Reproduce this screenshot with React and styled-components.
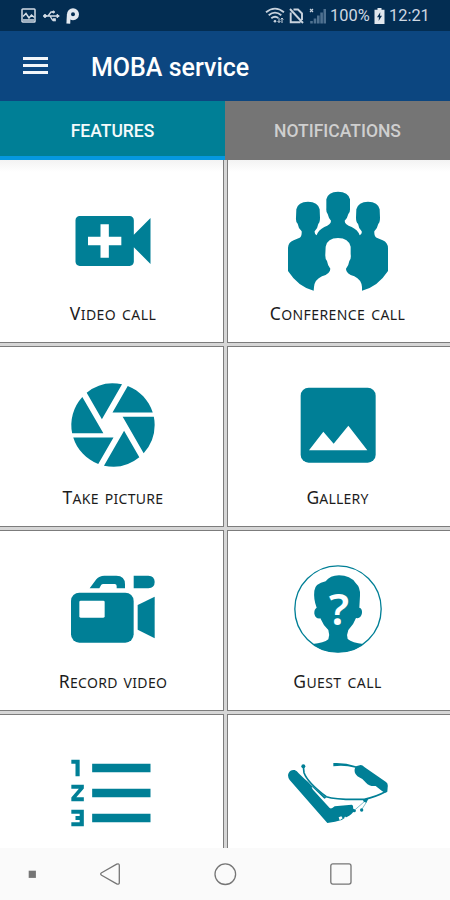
import styled, { createGlobalStyle } from "styled-components";
import { MdVideoCall, MdCamera, MdFormatListNumbered } from "react-icons/md";

const TEAL = "#007f96";

export default function App() {
    return (
        <Screen>
            <GlobalStyle/>
            <StatusBar>
                <StatusGroup>
                    <PictureIcon/>
                    <UsbIcon/>
                    <PIcon/>
                </StatusGroup>
                <StatusGroup $right>
                    <WifiIcon/>
                    <NoSimIcon/>
                    <SignalIcon/>
                    <StatusText $width="39px">100%</StatusText>
                    <BatteryIcon/>
                    <StatusText $width="41px">12:21</StatusText>
                </StatusGroup>
            </StatusBar>

            <Toolbar>
                <MenuButton aria-label="Menu">
                    <MenuLine/>
                    <MenuLine/>
                    <MenuLine/>
                </MenuButton>
                <Title>MOBA service</Title>
            </Toolbar>

            <Tabs>
                <Tab $active>FEATURES</Tab>
                <Tab>NOTIFICATIONS</Tab>
            </Tabs>

            <FeatureGrid>
                {features.map(({ label, spacing, Icon }, i) => (
                    <Feature key={i} $right={i % 2 === 1} $first={i < 2}>
                        <Icon size={100}/>
                        {label && <Label $spacing={spacing}>{label}</Label>}
                    </Feature>
                ))}
            </FeatureGrid>

            <NavBar>
                <NavIcon $gap="54px" viewBox="0 0 24 24">
                    <rect x="8.7" y="8.7" width="7.2" height="7.2" fill="#757575" stroke="none"/>
                </NavIcon>
                <NavIcon $gap="91px" viewBox="0 0 24 24">
                    <path d="M3.6 10.8 18.7 2.2Q21.3 1 21.3 3.6V20.4Q21.3 23 18.7 21.8L3.6 13.2Q1.8 12 3.6 10.8Z"/>
                </NavIcon>
                <NavIcon $gap="91.5px" viewBox="0 0 24 24">
                    <circle cx="12.3" cy="12.2" r="10.3"/>
                </NavIcon>
                <NavIcon viewBox="0 0 24 24">
                    <rect x="1.8" y="1.9" width="20.2" height="20.2" rx="2"/>
                </NavIcon>
            </NavBar>
        </Screen>
    );
}

const ConferenceIcon = ({ size }) => (
    <svg width={size} height={size} viewBox="189 92 300 300" fill={TEAL}>
        <path d="M266 391Q220 380 189 332V262Q190 246 206 240L224 232Q231 228 230 213Q220 204 218 190Q212 186 213 172L214 147Q219 124 249 124Q279 124 284 147L285 172Q285 186 280 190Q278 204 269 213Q268 221 275 225Q280 209 298 200Q318 193 318 181Q311 174 308 161Q303 157 304 143V117Q309 94 339 94Q370 94 375 117V143Q376 157 370 161Q367 174 359 181Q359 193 380 200Q399 209 404 225Q412 221 410 213Q401 204 399 190Q393 186 393 172L394 147Q400 124 429 124Q459 124 464 147L465 172Q465 186 460 190Q457 204 448 213Q447 228 455 232L473 240Q489 247 489 264V332Q458 380 411 391V380Q409 358 388 348Q362 340 363 325Q371 316 373 302Q379 297 377 281V259Q371 233 339 233Q307 233 302 259L301 281Q300 297 306 302Q308 316 316 325Q316 340 291 348Q269 358 267 380Z"/>
    </svg>
);

const GalleryIcon = ({ size }) => (
    <svg width={size} height={size} viewBox="189 105 300 300" fill={TEAL}>
        <rect x="227" y="143" width="225" height="225" rx="24"/>
        <path d="M252 331 295 275 326 311 370 257 427 331Z" fill="#fff"/>
    </svg>
);

const CamcorderIcon = ({ size }) => (
    <svg width={size} height={size} viewBox="190 102 300 300" fill={TEAL}>
        <rect x="214" y="203" width="188" height="150" rx="25"/>
        <rect x="239" y="227" width="76" height="51" rx="4" fill="#fff"/>
        <path d="M270 190 290 163Q299 152 314 152H350Q376 152 376 178V190H351V183Q351 177 345 177H311Q306 177 304 181L299 190Z"/>
        <path d="M402 152H446Q465 153 465 171Q465 189 446 190H402Z"/>
        <path d="M414 240 465 215V340L414 314Z"/>
    </svg>
);

const GuestIcon = ({ size }) => (
    <svg width={size} height={size} viewBox="189 102 300 300" fill={TEAL}>
        <circle cx="339" cy="252" r="129.5" fill="none" stroke={TEAL} strokeWidth="4"/>
        <path d="M263 357Q297 354 310 343Q315 330 310 315Q294 300 286 280Q271 282 268 266Q267 252 275 248Q265 222 268 197Q270 176 302 169Q315 151 342 151Q376 151 392 174Q407 188 405 212L403 248Q412 250 411 264Q408 282 393 279Q386 299 370 315Q364 329 368 342Q382 354 415 357Q385 382 339 382Q293 382 263 357Z"/>
        <QuestionMark x="342" y="299">?</QuestionMark>
    </svg>
);

const GlassesIcon = ({ size }) => (
    <svg width={size} height={size} viewBox="189 114 300 300" fill={TEAL}>
        <path d="M191 204Q196 193 209 195Q216 197 221 205L239 222Q248 229 258 240L304 278L298 281L265 249Q256 241 264 254L314 309Q320 313 329 304L380 299Q386 301 384 310L392 317L384 322Q376 333 359 339L350 345L330 350L307 354L194 225Q186 214 191 204Z"/>
        <path d="M235 184 237 203Q248 233 304 275Q334 285 418 283Q453 276 484 259" fill="none" stroke={TEAL} strokeWidth="5"/>
        <circle cx="235" cy="184" r="6"/>
        <path d="M325 174Q360 172 393 184L407 180Q412 180 419 187L483 231Q490 236 488 247L487 260Q480 266 470 257L452 243Q433 245 423 233L412 222Q394 214 390 204Q387 193 391 188Q356 179 325 184Z"/>
        <path d="M413 282H430L424 293 416 290Z"/>
        <path d="M418 290 388 316M424 292 411 312" fill="none" stroke={TEAL} strokeWidth="1.5"/>
        <circle cx="410" cy="315" r="5"/>
        <circle cx="388" cy="317" r="4.5"/>
        <path d="M341 337 349 334 353 340 344 346ZM357 336 363 335 362 341Z" fill="#fff"/>
    </svg>
);

const features = [
    { label: "Video call", spacing: "0.4px", Icon: MdVideoCall },
    { label: "Conference call", spacing: "0.4px", Icon: ConferenceIcon },
    { label: "Take picture", spacing: "0.3px", Icon: MdCamera },
    { label: "Gallery", spacing: "0.2px", Icon: GalleryIcon },
    { label: "Record video", spacing: "0.3px", Icon: CamcorderIcon },
    { label: "Guest call", spacing: "0.4px", Icon: GuestIcon },
    { Icon: MdFormatListNumbered },
    { Icon: GlassesIcon },
];

const PictureIcon = () => (
    <svg width="15" height="15" viewBox="0 0 15 15" fill="none" stroke="#d3dce6" strokeWidth="1.5">
        <rect x="1" y="1" width="13" height="13" rx="0.8"/>
        <path d="M2 8.5 5 5.5 8 10 10.5 7 13.5 9.5M2 12H13"/>
    </svg>
);

const UsbIcon = () => (
    <svg width="17" height="14" viewBox="0 0 17 14" fill="#d3dce6" stroke="#d3dce6">
        <path d="M2 7H15M5 7 8 3H10M7 7 9.5 11H11" fill="none" strokeWidth="1.3"/>
        <circle cx="2" cy="7" r="1.4"/>
        <circle cx="10.5" cy="3" r="1"/>
        <rect x="10.3" y="9.8" width="2" height="2"/>
        <path d="M14 5.3 16.3 7 14 8.7Z"/>
    </svg>
);

const PIcon = () => (
    <svg width="13" height="16" viewBox="0 0 13 16" fill="none" stroke="#e3e9f0">
        <circle cx="7" cy="6.2" r="4" strokeWidth="4"/>
        <line x1="2.8" y1="6" x2="2.3" y2="15.7" strokeWidth="3.8"/>
    </svg>
);

const WifiIcon = () => (
    <svg width="20" height="17" viewBox="0 0 20 17" fill="none" stroke="#c9d3de" strokeWidth="1.8">
        <path d="M1 5.3Q10-2 19 5.3M3.7 8.3Q10 3 16.3 8.3M6.3 11.3Q10 8.3 13.3 11"/>
        <circle cx="10" cy="14.2" r="1.3" fill="#c9d3de" stroke="none"/>
        <path d="M14 11V15.5M12.5 14 14 15.5 15.5 14M17 16V11M15.7 12.5 17 11 18.3 12.5" strokeWidth="1"/>
    </svg>
);

const NoSimIcon = () => (
    <svg width="15" height="16" viewBox="0 0 15 16" fill="none" stroke="#c9d3de" strokeWidth="1.9">
        <path d="M4.5 1.5H9L13 5.5V12M1.7 4.5V14.2H11.5M1 1 14 15"/>
    </svg>
);

const SignalIcon = () => (
    <svg width="17" height="16" viewBox="0 0 17 16" stroke="#4f7190" strokeWidth="2.6">
        <path d="M2.5 15.5V13M6 15.5V10.5M9.3 15.5V7.5M12.6 15.5V4.5M15.8 15.5V1"/>
        <path d="M1 1 4 4M4 1 1 4" stroke="#c9d3de" strokeWidth="1.2"/>
    </svg>
);

const BatteryIcon = () => (
    <svg width="11" height="16" viewBox="0 0 11 16" fill="#e1e7ee">
        <path d="M3.5 0H7.5V1.7H10.5V16H0.5V1.7H3.5Z"/>
        <path d="M6.3 4.3 3 9.2H5L4.6 13 8 7.8H6Z" fill="#062e53"/>
    </svg>
);

const GlobalStyle = createGlobalStyle`
  body {
    margin: 0;
    background-color: #fff;
  }
`

const Screen = styled.div`
  display: flex;
  flex-direction: column;
  width: 100%;
  height: 900px;
  overflow: hidden;
  font-family: Roboto, sans-serif;
`

const StatusBar = styled.div`
  display: flex;
  flex: none;
  justify-content: space-between;
  height: 31px;
  padding: 0 20px 0 21px;
  background-color: #032d52;
`

const StatusGroup = styled.div`
  display: flex;
  align-items: center;
  gap: ${({ $right }) => ($right ? "4.5px" : "6.5px")};
`

const StatusText = styled.span`
  width: ${({ $width }) => $width};
  white-space: nowrap;
  font-size: 16.4px;
  line-height: 32px;
  color: #cfd8e2;
`

const Toolbar = styled.header`
  display: flex;
  flex: none;
  align-items: center;
  height: 70px;
  padding-left: 23px;
  background-color: #0c4680;
`

const MenuButton = styled.button`
  display: flex;
  flex-direction: column;
  gap: 4px;
  width: 25px;
  margin: 0 43px 1px 0;
  padding: 0;
  border: none;
  background: none;
`

const MenuLine = styled.span`
  height: 3px;
  background-color: #f2f6fa;
`

const Title = styled.h1`
  margin: 2px 0 0;
  font-size: 25px;
  font-weight: 500;
  color: #fff;
`

const Tabs = styled.div`
  display: grid;
  flex: none;
  grid-template-columns: 1fr 1fr;
  height: 59px;
`

const Tab = styled.div`
  display: flex;
  justify-content: center;
  align-items: center;
  box-sizing: border-box;
  padding-top: ${({ $active }) => ($active ? "5px" : "1px")};
  border-bottom: ${({ $active }) => ($active ? "4px solid #0598e0" : "none")};
  background-color: ${({ $active }) => ($active ? TEAL : "#757575")};
  font-size: 17.5px;
  font-weight: 500;
  color: ${({ $active }) => ($active ? "#f4fafb" : "#cfcfcf")};
`

const FeatureGrid = styled.main`
  display: grid;
  flex: 1;
  grid-template-columns: 224px 1fr;
  grid-template-rows: 183px 181px 181px 181px;
  gap: 3px;
  min-height: 0;
  overflow: hidden;
  background-color: #d6d6d6;
`

const Feature = styled.div`
  display: flex;
  flex-direction: column;
  align-items: center;
  box-sizing: border-box;
  padding: ${({ $right, $first }) => `${$first ? 31 : 28}px ${$right ? 3 : 0}px 0 ${$right ? 0 : 3}px`};
  border: solid #7c7c7c;
  border-width: ${({ $right, $first }) => `${$first ? 0 : 1}px ${$right ? 0 : 1}px 1px ${$right ? 1 : 0}px`};
  background: ${({ $first }) => ($first ? "linear-gradient(#f3f3f3, #fff 12px)" : "#fff")};
  color: ${TEAL};

  svg {
    flex: none;
  }
`

const Label = styled.div`
  margin-top: 9px;
  white-space: nowrap;
  font-family: "Noto Sans", sans-serif;
  font-size: 14px;
  line-height: 26px;
  letter-spacing: ${({ $spacing }) => $spacing};
  word-spacing: 2px;
  text-transform: uppercase;
  color: #1c1c1c;

  &::first-letter {
    font-size: 17.5px;
  }
`

const QuestionMark = styled.text`
  font-family: "Noto Sans", sans-serif;
  font-size: 132px;
  font-weight: 600;
  text-anchor: middle;
  fill: #fff;
`

const NavBar = styled.nav`
  display: flex;
  flex: none;
  align-items: center;
  height: 52px;
  padding-left: 20px;
  background-color: #fafafa;
`

const NavIcon = styled.svg`
  flex: none;
  width: 24px;
  height: 24px;
  margin-right: ${({ $gap }) => $gap || "0"};
  fill: none;
  stroke: #757575;
  stroke-width: 1.3;
`
